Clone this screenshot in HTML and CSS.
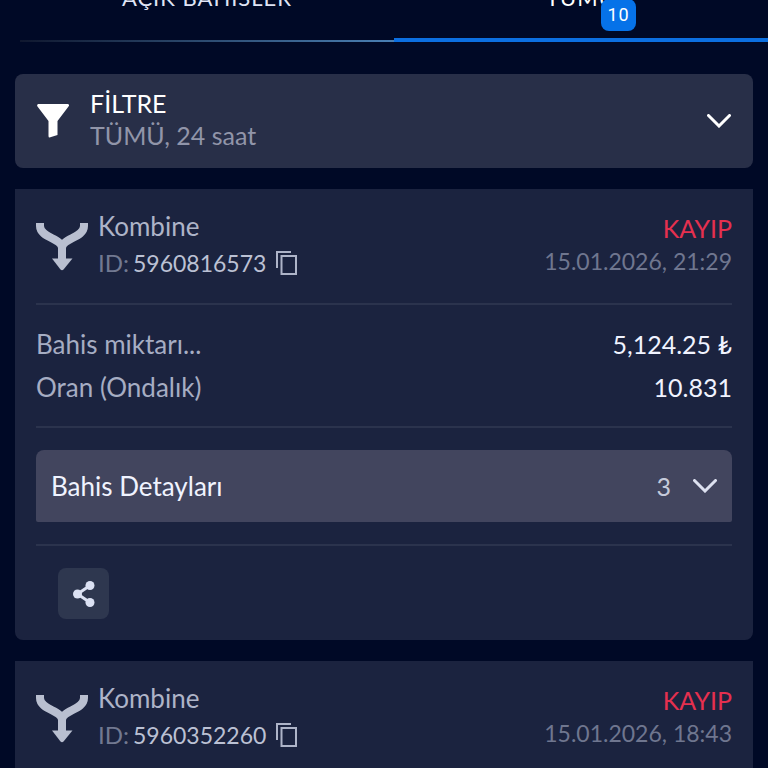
FILE: index.html
```html
<!DOCTYPE html>
<html lang="tr">
<head>
    <meta charset="UTF-8">
    <meta name="viewport" content="width=device-width, initial-scale=1.0">
    <title>Bahislerim</title>
    <link rel="stylesheet" href="styles.css">
</head>
<body>
    <svg class="sprite" aria-hidden="true">
        <symbol id="icon-combo" viewBox="0 0 52 48">
            <path d="M4 0V3C4 15 26 15 26 25V37M48 0V3C48 15 26 15 26 25" fill="none" stroke="currentColor" stroke-width="8"/>
            <path d="M16 35.500H36.500L27.500 46.500Q26 48 24.500 46.500Z" fill="currentColor"/>
        </symbol>
        <symbol id="icon-copy" viewBox="0 0 22 24">
            <path d="M1 17V1H15M5.500 5H20V23H5.500Z" fill="none" stroke="currentColor" stroke-width="2"/>
        </symbol>
        <symbol id="icon-chevron" viewBox="0 0 24 14">
            <path d="M1.500 1.500L12 12L22.500 1.500" fill="none" stroke="currentColor" stroke-width="3" stroke-linecap="round" stroke-linejoin="miter"/>
        </symbol>
    </svg>

    <nav class="tabs">
        <a href="#open" class="tab">AÇIK BAHİSLER</a>
        <a href="#all" class="tab active"><span class="tab-text">TÜMÜ<span class="badge">10</span></span></a>
    </nav>

    <main class="content">
        <button class="filter">
            <svg class="filter-icon" viewBox="0 0 32 34" aria-hidden="true">
                <path d="M1 0H31Q33 1 31.500 2.500L20.500 17V31L12.500 33.500Q11.500 33.500 11.500 32V17L.5 2.500Q-.5 1 1 0Z" fill="currentColor"/>
            </svg>
            <span class="filter-text">
                <span class="filter-title">FİLTRE</span>
                <span class="filter-value">TÜMÜ, 24 saat</span>
            </span>
            <svg class="chevron" aria-hidden="true"><use href="#icon-chevron"/></svg>
        </button>

        <article class="card">
            <header class="card-head">
                <svg class="combo-icon" aria-hidden="true"><use href="#icon-combo"/></svg>
                <div class="bet">
                    <div class="bet-type">Kombine</div>
                    <div class="bet-id">
                        <span class="id-label">ID:</span>
                        <span class="number">5960816573</span>
                        <button class="copy" aria-label="Kopyala"><svg aria-hidden="true"><use href="#icon-copy"/></svg></button>
                    </div>
                </div>
                <div class="result">
                    <div class="status">KAYIP</div>
                    <div class="date">15.01.2026, 21:29</div>
                </div>
            </header>
            <dl class="amounts">
                <div class="amount">
                    <dt>Bahis miktarı...</dt>
                    <dd>5,124.25 ₺</dd>
                </div>
                <div class="amount">
                    <dt>Oran (Ondalık)</dt>
                    <dd>10.831</dd>
                </div>
            </dl>
            <div class="section">
                <button class="details">
                    <span class="details-title">Bahis Detayları</span>
                    <span class="count">3</span>
                    <svg class="chevron" aria-hidden="true"><use href="#icon-chevron"/></svg>
                </button>
            </div>
            <footer class="section share-row">
                <button class="share" aria-label="Paylaş">
                    <svg viewBox="0 0 22 26" aria-hidden="true">
                        <path d="M17 4.500L4.500 13L17 21.500" fill="none" stroke="currentColor" stroke-width="3"/>
                        <circle cx="17" cy="4.500" r="4.500" fill="currentColor"/>
                        <circle cx="4.500" cy="13" r="4.500" fill="currentColor"/>
                        <circle cx="17" cy="21.500" r="4.500" fill="currentColor"/>
                    </svg>
                </button>
            </footer>
        </article>

        <article class="card">
            <header class="card-head">
                <svg class="combo-icon" aria-hidden="true"><use href="#icon-combo"/></svg>
                <div class="bet">
                    <div class="bet-type">Kombine</div>
                    <div class="bet-id">
                        <span class="id-label">ID:</span>
                        <span class="number">5960352260</span>
                        <button class="copy" aria-label="Kopyala"><svg aria-hidden="true"><use href="#icon-copy"/></svg></button>
                    </div>
                </div>
                <div class="result">
                    <div class="status">KAYIP</div>
                    <div class="date">15.01.2026, 18:43</div>
                </div>
            </header>
        </article>
    </main>
</body>
</html>
```
FILE: styles.css
```css
* {
    box-sizing: border-box;
}

body {
    margin: 0;
    height: 100vh;
    overflow: hidden;
    background-color: #000926;
    color: #f0f3ff;
    font-family: Lato, "Open Sans", sans-serif;
    font-size: 25px;
}

button {
    border: none;
    padding: 0;
    background: none;
    color: inherit;
    font: inherit;
    text-align: left;
    cursor: pointer;
}

svg {
    display: block;
    flex: none;
}

.sprite {
    position: absolute;
    width: 0;
    height: 0;
}

/* tabs, partly scrolled out at the top */
.tabs {
    display: flex;
    margin-top: -22px;
    padding-left: 20px;
}

.tab {
    flex: 1;
    height: 64px;
    padding-top: 4px;
    line-height: 32px;
    font-size: 22px;
    letter-spacing: 1px;
    text-align: center;
    text-decoration: none;
    color: #dfe4f5;
    background: linear-gradient(to right, #10182f, #4a80b4) bottom / 100% 2px no-repeat;
}

.tab.active {
    color: #fff;
    background: none;
    border-bottom: 4px solid #0c6fe0;
}

.tab-text {
    position: relative;
}

.badge {
    position: absolute;
    left: 55px;
    top: 15px;
    width: 35px;
    height: 32px;
    border-radius: 8px;
    background-color: #0672e8;
    font-family: Roboto, sans-serif;
    font-size: 18px;
}

.content {
    display: flex;
    flex-direction: column;
    gap: 21px;
    padding: 32px 15px;
}

.filter {
    display: flex;
    align-items: center;
    gap: 21px;
    padding: 13px 22px;
    border-radius: 8px;
    background-color: #282f48;
    color: #fff;
}

.filter-icon {
    width: 32px;
    height: 34px;
}

.filter-text {
    flex: 1;
    padding-bottom: 4px;
    line-height: 32px;
}

.filter-title,
.filter-value {
    display: block;
}

.filter-value {
    color: #9195a9;
}

.chevron {
    width: 24px;
    height: 14px;
}

.card {
    padding: 0 21px;
    border-radius: 0 0 8px 8px;
    background-color: #1b233f;
}

.card-head {
    display: flex;
    gap: 10px;
    padding: 20px 0 23px;
    line-height: 34px;
}

.combo-icon {
    width: 52px;
    height: 48px;
    margin-top: 14px;
    color: #b9bfd0;
}

.bet {
    flex: 1;
    color: #aeb4c8;
}

.bet-type,
.amount dt,
.details-title {
    font-size: 26px;
}

.bet-id {
    display: flex;
    align-items: center;
    gap: 4px;
    margin-top: 3px;
}

.id-label {
    font-size: 24px;
    color: #727991;
}

.number,
.date {
    font-size: 23px;
}

.number {
    color: #bbc1d4;
}

.copy {
    margin-left: 6px;
}

.copy svg {
    width: 22px;
    height: 24px;
}

.result {
    padding-top: 3px;
    line-height: 33px;
    text-align: right;
}

.status {
    color: #e5304f;
}

.date {
    color: #6f768f;
}

.amounts,
.section {
    margin: 0;
    padding: 22px 0;
    border-top: 2px solid #2b334d;
}

.amounts {
    display: flex;
    flex-direction: column;
    gap: 9px;
}

.amount {
    display: flex;
    justify-content: space-between;
    line-height: 34px;
}

.amount dt {
    color: #a6adc3;
}

.amount dd {
    margin: 0;
}

.details {
    display: flex;
    align-items: center;
    width: 100%;
    height: 72px;
    padding: 0 15px;
    border-radius: 8px 8px 2px 2px;
    background-color: #42455e;
}

.count {
    margin-left: auto;
    margin-right: 22px;
    color: #c5cada;
}

.details .chevron {
    color: #dde1f0;
}

.share-row {
    padding: 22px 22px 21px;
}

.share {
    display: flex;
    align-items: center;
    justify-content: center;
    width: 51px;
    height: 51px;
    border-radius: 8px;
    background-color: #2e374f;
    color: #dbe1f3;
}

.share svg {
    width: 22px;
    height: 26px;
}
```
